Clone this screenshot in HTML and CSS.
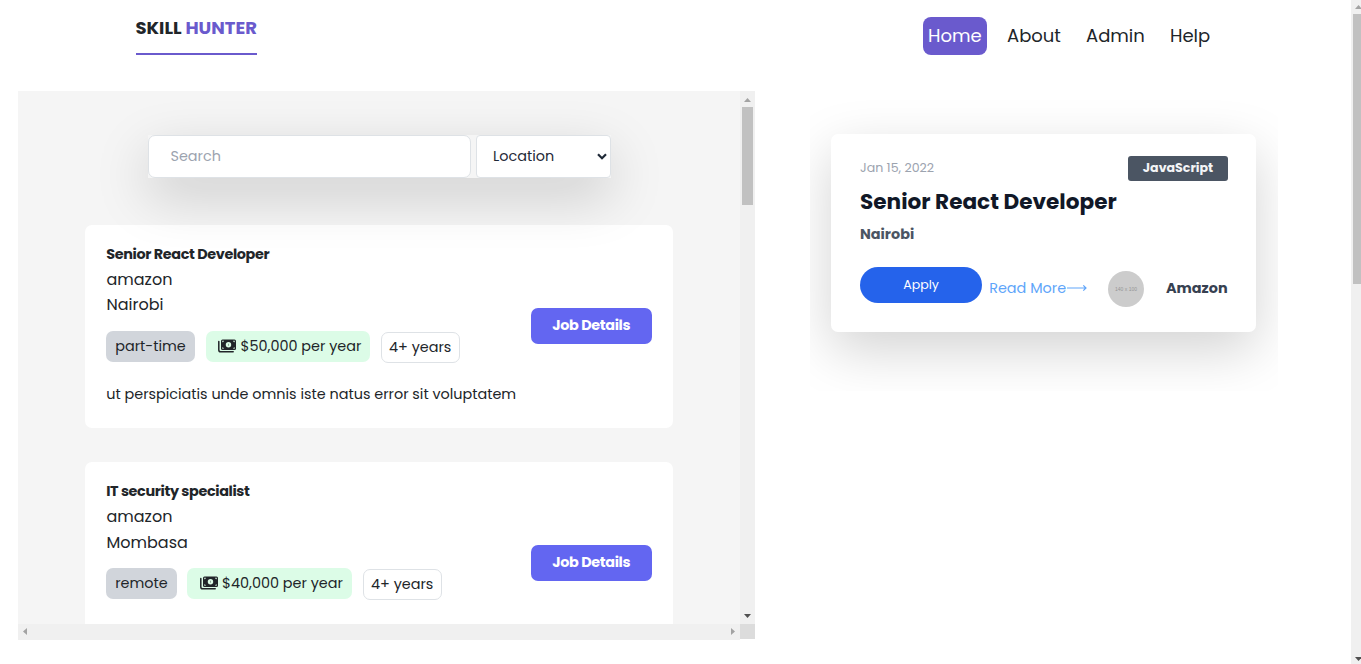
FILE: index.html
```
<!DOCTYPE html>
<html lang="en">
<head>
<meta charset="utf-8">
<title>Skill Hunter</title>
<link rel="stylesheet" href="styles.css">
</head>
<body>
<div class="page">
<div class="content">
  <header class="header">
    <div class="logo">SKILL <span class="accent">HUNTER</span></div>
    <nav class="nav">
      <a class="nav-link active">Home</a>
      <a class="nav-link about">About</a>
      <a class="nav-link admin">Admin</a>
      <a class="nav-link help">Help</a>
    </nav>
  </header>
  <main class="main">
    <section class="panel">
      <div class="jobs">
        <form class="search">
          <div class="field">Search</div>
          <div class="select">Location
            <svg class="chev" viewBox="0 0 10 7"><path d="M1 1.200l4 4 4-4" fill="none" stroke="currentColor" stroke-width="2.200"/></svg>
          </div>
        </form>
        <article class="job">
          <div class="info">
            <h2 class="title">Senior React Developer</h2>
            <p class="line">amazon</p>
            <p class="line">Nairobi</p>
            <div class="tags">
              <span class="tag type">part-time</span>
              <span class="tag pay"><svg class="cash" viewBox="0 0 18 14"><path d="M.8 2.500v8.500q0 1.800 1.800 1.800h12.600" fill="none" stroke="currentColor" stroke-width="1.500" stroke-linecap="round"/><rect x="3" y="0.500" width="15" height="10.500" rx="1.500" fill="currentColor"/><circle cx="10.500" cy="5.700" r="2.700" fill="#dcfce7"/><path d="M10.300 4.700h.4v2h-.4z" fill="currentColor"/><path d="M4.300 3.300q1.500 0 1.500-1.500h-1.500zM16.700 3.300q-1.500 0-1.500-1.500h1.500zM4.300 8.200q1.500 0 1.500 1.500h-1.500zM16.700 8.200q-1.500 0-1.500 1.500h1.500z" fill="#dcfce7"/></svg>$50,000 per year</span>
              <span class="tag exp">4+ years</span>
            </div>
            <p class="desc">ut perspiciatis unde omnis iste natus error sit voluptatem</p>
          </div>
          <button class="details">Job Details</button>
        </article>
        <article class="job">
          <div class="info">
            <h2 class="title">IT security specialist</h2>
            <p class="line">amazon</p>
            <p class="line lower">Mombasa</p>
            <div class="tags">
              <span class="tag type remote">remote</span>
              <span class="tag pay wide"><svg class="cash" viewBox="0 0 18 14"><path d="M.8 2.500v8.500q0 1.800 1.800 1.800h12.600" fill="none" stroke="currentColor" stroke-width="1.500" stroke-linecap="round"/><rect x="3" y="0.500" width="15" height="10.500" rx="1.500" fill="currentColor"/><circle cx="10.500" cy="5.700" r="2.700" fill="#dcfce7"/><path d="M10.300 4.700h.4v2h-.4z" fill="currentColor"/><path d="M4.300 3.300q1.500 0 1.500-1.500h-1.500zM16.700 3.300q-1.500 0-1.500-1.500h1.500zM4.300 8.200q1.500 0 1.500 1.500h-1.500zM16.700 8.200q-1.500 0-1.500 1.500h1.500z" fill="#dcfce7"/></svg>$40,000 per year</span>
              <span class="tag exp">4+ years</span>
            </div>
          </div>
          <button class="details">Job Details</button>
        </article>
      </div>
      <div class="bar vbar">
        <svg class="arrow" viewBox="0 0 15 15"><path d="M4 11l3.500-4 3.500 4z" fill="#a3a3a3"/></svg>
        <div class="thumb"></div>
        <svg class="arrow end" viewBox="0 0 15 15"><path d="M4 5h7l-3.500 4z" fill="#505050"/></svg>
      </div>
      <div class="bar hbar">
        <svg class="arrow" viewBox="0 0 15 15"><path d="M9 4v7l-4-3.500z" fill="#a3a3a3"/></svg>
        <svg class="arrow end" viewBox="0 0 15 15"><path d="M6 4v7l4-3.500z" fill="#a3a3a3"/></svg>
      </div>
      <div class="corner"></div>
    </section>
    <section class="side">
      <article class="card">
        <div class="row top"><span class="date">Jan 15, 2022</span><span class="skill">JavaScript</span></div>
        <h1 class="headline">Senior React Developer</h1>
        <p class="place">Nairobi</p>
        <div class="row actions">
          <button class="apply">Apply</button>
          <a class="more">Read More<svg class="longarrow" viewBox="0 0 20 8"><path d="M0 4h19M16.300 1.300L19 4l-2.700 2.700" fill="none" stroke="currentColor" stroke-width="1.200"/></svg></a>
          <span class="avatar">140 x 100</span>
          <span class="company">Amazon</span>
        </div>
      </article>
    </section>
  </main>
</div>
<div class="bar pagebar">
  <svg class="arrow" viewBox="0 0 15 15"><path d="M4 9l3.500-4 3.500 4z" fill="#a3a3a3"/></svg>
  <div class="thumb"></div>
  <svg class="arrow end" viewBox="0 0 15 15"><path d="M4 8h7l-3.500 4z" fill="#505050"/></svg>
</div>
</div>
</body>
</html>
```

FILE: styles.css
```
* { box-sizing: border-box; }
body { margin: 0; height: 664px; overflow: hidden; background: #fff; color: #212529; font-family: Poppins, Inter, "Open Sans", sans-serif; }
h1, h2, p { margin: 0; }
button { border: 0; padding: 0; font: inherit; }
svg { display: block; flex: none; }
.page { display: flex; width: 1361px; height: 664px; overflow: hidden; white-space: nowrap; }
.content { width: 1351px; flex: none; }
.header { height: 91px; display: flex; justify-content: space-between; padding: 17px 141px 0 135.500px; }
.logo { width: 121px; height: 38px; border-bottom: 2px solid #6a5acd; font-size: 18px; line-height: 22px; font-weight: 700; }
.accent { color: #6a5acd; }
.nav { display: flex; font-size: 18px; line-height: 38px; }
.nav-link { height: 38px; }
.active { width: 64px; padding-left: 5px; margin-right: 20px; border-radius: 8px; background: #6a5acd; color: #fff; }
.about { width: 79px; }
.admin { width: 84px; }
.help { width: 40px; }
.main { display: flex; padding-left: 18px; }
.panel { width: 737px; height: 548.500px; display: grid; grid-template: 533px 15.500px / 722px 15px; }
.jobs { overflow: hidden; background: #f5f5f5; padding: 44px 67px 0; }
.search { position: relative; z-index: 1; display: flex; gap: 5px; width: 463px; height: 43px; margin: 0 0 47px 63px; background: #f5f5f5; box-shadow: 0 18px 54px rgba(0,0,0,.175); font-size: 14.400px; line-height: 41px; }
.field { width: 323px; padding-left: 21.500px; border: 1px solid #dee2e6; border-radius: 7px; background: #fff; color: #9ca3af; }
.select { width: 135px; padding: 0 3px 0 16px; display: flex; justify-content: space-between; align-items: center; border: 1px solid #dee2e6; border-radius: 4px; background: #fff; color: #1f2937; }
.chev { width: 10px; height: 7px; }
.job { display: flex; justify-content: space-between; align-items: center; width: 588px; height: 203px; margin-bottom: 34px; padding: 0 21px; border-radius: 7px; background: #fff; }
.info { align-self: flex-start; padding-top: 18px; }
.title { padding-left: .2px; font-size: 14.400px; line-height: 23px; font-weight: 700; letter-spacing: -.36px; }
.line { position: relative; top: .6px; padding-left: .5px; font-size: 16px; line-height: 25.500px; }
.lower { top: 1.600px; }
.tags { display: flex; margin-top: 14px; font-size: 14.400px; line-height: 30px; }
.tag { height: 31px; border-radius: 7px; margin-right: 11px; flex: none; }
.type { width: 89px; padding-left: 9.200px; background: #d1d5db; }
.remote { width: 71px; margin-right: 10px; }
.pay { display: flex; align-items: center; gap: 4.500px; width: 164px; padding-left: 12px; background: #dcfce7; line-height: 29px; padding-bottom: 1px; }
.wide { width: 165px; padding-left: 12.500px; }
.cash { width: 18px; height: 14px; }
.exp { width: 79px; margin-top: 1px; padding-left: 7px; border: 1px solid #dee2e6; line-height: 28px; }
.desc { margin-top: 20px; padding-left: .2px; font-size: 14.400px; line-height: 22px; }
.details { width: 121px; height: 36px; margin-bottom: 2px; padding-right: .6px; border-radius: 7px; background: #6366f1; color: #fff; font-size: 14.400px; font-weight: 700; letter-spacing: -.36px; }
.bar { background: #f0f0f0; display: flex; }
.vbar { flex-direction: column; }
.arrow { width: 15px; height: 15px; }
.end { margin-left: auto; }
.vbar .end, .pagebar .end { margin: auto 0 0; }
.thumb { background: #c1c1c1; flex: none; }
.vbar .thumb { width: 11px; height: 98px; margin: 1px 0 0 2px; }
.corner { height: 15px; background: #dcdcdc; }
.side { width: 468px; height: 300px; margin-left: 55px; padding: 43px 0 0 21px; overflow: hidden; }
.card { width: 425px; height: 198px; padding: 22px 28px 0 29px; border-radius: 7px; background: #fff; box-shadow: 0 18px 54px rgba(0,0,0,.175); }
.row { display: flex; }
.top { justify-content: space-between; height: 25px; }
.date { color: #9ca3af; font-size: 12.600px; line-height: 23px; }
.skill { width: 100px; height: 25px; border-radius: 3px; background: #4b5563; color: #f3f4f6; text-align: center; font-size: 12.600px; line-height: 24px; font-weight: 700; }
.headline { margin-top: 5px; color: #111827; font-size: 21.600px; line-height: 32px; font-weight: 700; }
.place { color: #4b5563; margin-top: 4px; font-size: 14.400px; line-height: 24px; font-weight: 700; }
.actions { margin-top: 21px; }
.apply { width: 122px; height: 36px; border-radius: 18px; background: #2563eb; color: #fff; font-size: 12.600px; }
.more { display: flex; align-items: center; width: 98px; height: 42px; margin-left: 7px; padding-left: .2px; color: #60a5fa; font-size: 14.400px; }
.longarrow { width: 20px; height: 8px; margin-left: auto; }
.avatar { width: 36px; height: 36px; margin: 4px 22px 0 21px; border-radius: 50%; background: #ccc; color: #969696; text-align: center; font: 5px/37px "Liberation Sans", sans-serif; }
.company { color: #374151; font-size: 14.400px; line-height: 42px; font-weight: 700; }
.pagebar { flex: none; flex-direction: column; width: 15px; height: 664px; }
.pagebar .thumb { width: 11px; height: 270px; margin: -1px 0 0 2px; }
```
